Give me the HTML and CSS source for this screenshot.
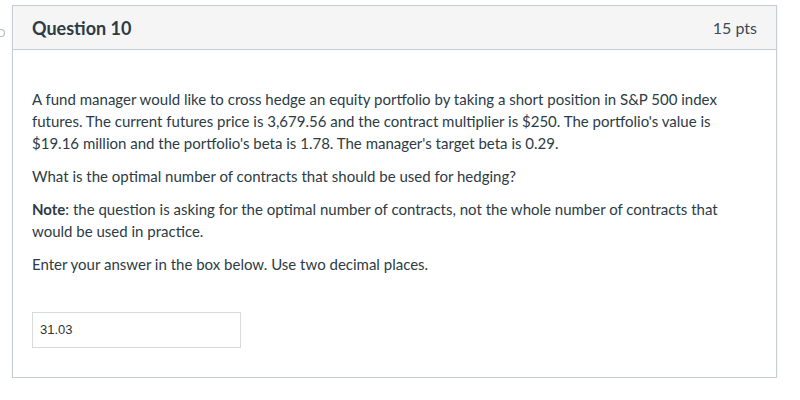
FILE: index.html
```html
<!DOCTYPE html>
<html>
<head>
<meta charset="utf-8">
<link rel="stylesheet" href="styles.css">
</head>
<body>
<div class="page">
  <div class="marker"><svg width="6" height="10" viewBox="0 0 6 10"><circle cx="1" cy="5" r="3.5" fill="none" stroke="#b8bcc0" stroke-width="1.2"/></svg></div>
  <div class="card">
    <div class="header">
      <span class="title">Question 10</span>
      <span class="pts">15 pts</span>
    </div>
    <div class="body">
      <p>A fund manager would like to cross hedge an equity portfolio by taking a short position in S&amp;P 500 index futures. The current futures price is 3,679.56 and the contract multiplier is $250. The portfolio's value is $19.16 million and the portfolio's beta is 1.78. The manager's target beta is 0.29.</p>
      <p>What is the optimal number of contracts that should be used for hedging?</p>
      <p><strong>Note</strong>: the question is asking for the optimal number of contracts, not the whole number of contracts that would be used in practice.</p>
      <p>Enter your answer in the box below. Use two decimal places.</p>
      <div class="answer">31.03</div>
    </div>
  </div>
</div>
</body>
</html>
```
FILE: styles.css
```css
html, body {
  margin: 0;
  padding: 0;
  background: #ffffff;
}
.page {
  display: flex;
  align-items: flex-start;
  padding-top: 5px;
  font-family: Lato, "Open Sans", sans-serif;
  color: #2d3b45;
}
.marker {
  width: 12px;
  padding-top: 17px;
}
.card {
  width: 763px;
  height: 371px;
  border: 1px solid #c7cdd1;
  box-shadow: 0 1px 2px rgba(0,0,0,0.08);
}
.header {
  height: 43px;
  background: #f5f5f5;
  border-bottom: 1px solid #c7cdd1;
  display: flex;
  align-items: center;
  justify-content: space-between;
  padding: 0 19px 0 19px;
}
.title {
  font-size: 18px;
  font-weight: 700;
}
.pts {
  font-size: 16px;
  color: #3b4a55;
}
.body {
  padding: 38px 40px 0 19px;
  font-size: 15px;
  line-height: 22px;
}
.body p {
  margin: 0 0 11px 0;
}
.body strong {
  font-weight: 700;
}
.answer {
  margin-top: 37px;
  width: 200px;
  height: 34px;
  border: 1px solid #d7dadd;
  padding: 0 0 0 7px;
  font-family: "Liberation Sans", Arial, sans-serif;
  font-size: 13px;
  line-height: 34px;
  color: #333;
}
```
